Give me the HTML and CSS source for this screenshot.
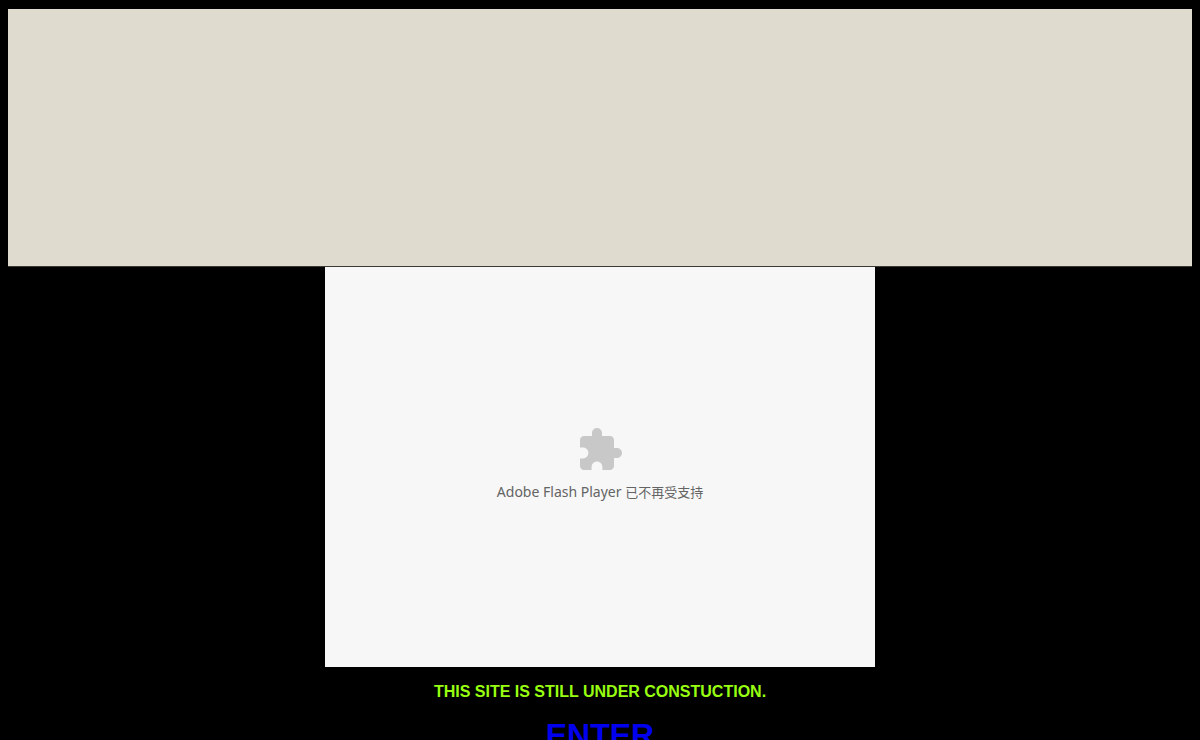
FILE: index.html
```html
<!DOCTYPE html>
<html lang="en">
<head>
  <meta charset="utf-8">
  <meta name="viewport" content="width=device-width">
  <title>Under construction</title>
  <link rel="stylesheet" href="styles.css">
</head>
<body>
<div class="banner"></div>
<div class="plugin" lang="zh-CN">
  <svg class="plugin-icon" viewBox="0 0 24 24" aria-hidden="true">
    <path d="M20.5 11H19V7c0-1.1-.9-2-2-2h-4V3.5C13 2.12 11.88 1 10.5 1S8 2.12 8 3.5V5H4c-1.1 0-1.99.9-1.99 2v3.8H3.5c1.49 0 2.7 1.21 2.7 2.7s-1.21 2.7-2.7 2.7H2V20c0 1.1.9 2 2 2h3.8v-1.5c0-1.49 1.21-2.7 2.7-2.7s2.7 1.21 2.7 2.7V22H17c1.1 0 2-.9 2-2v-4h1.5c1.38 0 2.5-1.12 2.5-2.5S21.88 11 20.5 11z"/>
  </svg>
  <div class="plugin-text">Adobe Flash Player <span class="cjk">已不再受支持</span></div>
</div>
<p class="notice">THIS SITE IS STILL UNDER CONSTUCTION.</p>
<a class="enter" href="#">ENTER</a>
</body>
</html>
```
FILE: styles.css
```css
body {
  margin: 0;
  padding: 9px 8px;
  background: #000;
  font-family: Arial, "Liberation Sans", sans-serif;
  text-align: center;
}
.banner {
  height: 257px;
  background: #dfdbcf;
  border-bottom: 1px solid #3a3934;
}
.plugin {
  display: flex;
  flex-direction: column;
  align-items: center;
  justify-content: center;
  gap: 8px;
  box-sizing: border-box;
  max-width: 550px;
  height: 400px;
  margin: 0 auto;
  padding-bottom: 6px;
  background: #f7f7f7;
}
.plugin-icon {
  width: 48px;
  height: 48px;
  fill: #c8c8c8;
}
.plugin-text {
  color: #646464;
  font: 14px/20px "Noto Sans", "Noto Sans CJK SC", sans-serif;
}
.cjk {
  font-size: 13px;
}
.notice {
  margin: 16px 0;
  color: #9f1;
  font-size: 16px;
  font-weight: bold;
  line-height: 18px;
}
.enter {
  color: #00e;
  font-size: 32px;
  font-weight: bold;
  line-height: 36px;
}
```
